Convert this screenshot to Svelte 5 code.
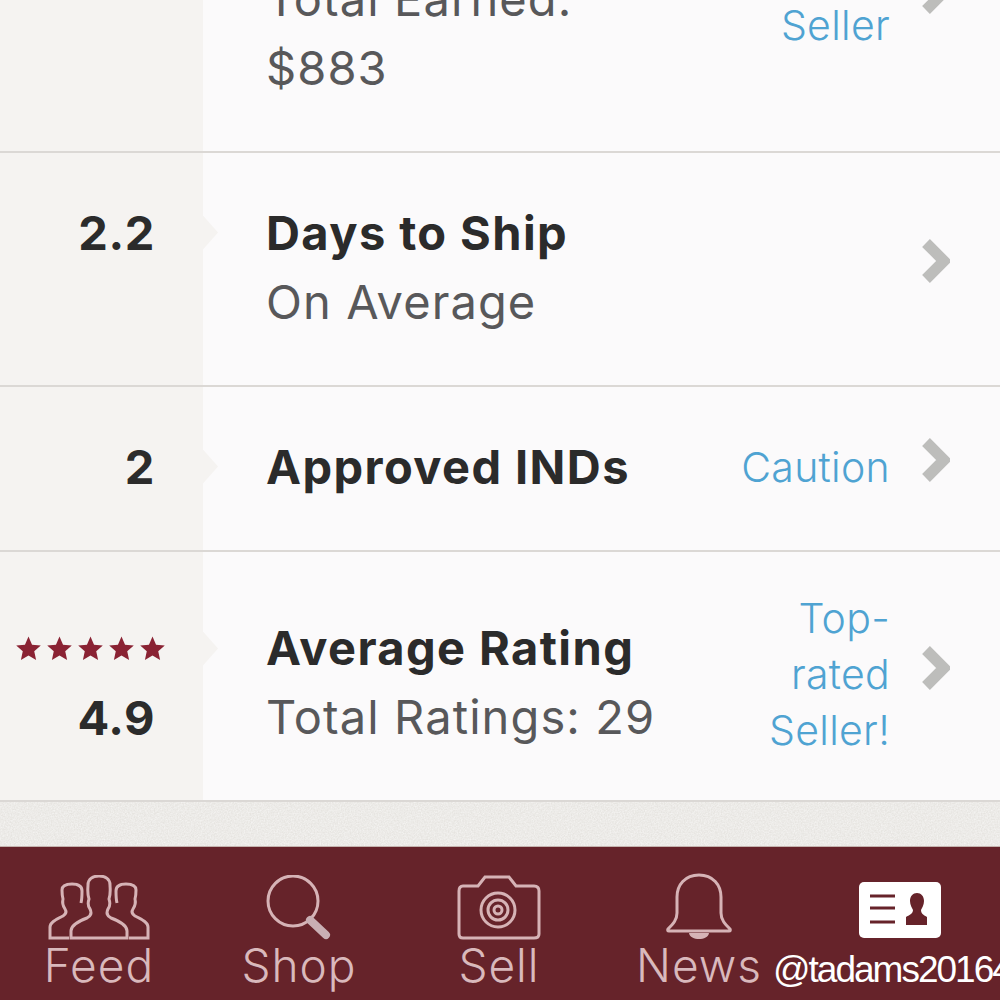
<script>
  const rows = [
    { id: 'earned', sub: ['Total Earned:', '$883'], link: 'Seller' },
    { id: 'ship', value: '2.2', title: 'Days to Ship', sub: ['On Average'] },
    { id: 'inds', value: '2', title: 'Approved INDs', link: 'Caution' },
    { id: 'rating', value: '4.9', stars: 5, title: 'Average Rating', sub: ['Total Ratings: 29'], link: 'Top-rated Seller!' }
  ];

  const tabs = ['Feed', 'Shop', 'Sell', 'News'];
  const bust = 'C22 50 30 46 38 43 C42 41 43 38 41 34 C38 30 39 27 40 24 C38 18 39 13 39 10 C39 4 44 1 50 1 C56 1 61 4 61 10 C61 13 62 18 60 24 C61 27 62 30 59 34 C57 38 58 41 62 43 C70 46 78 50 78 56';
</script>

<div class="screen">
  <div class="list">
    {#each rows as row}
      <div class="row {row.id}">
        <div class="side">
          {#if row.stars}
            <div class="first stars">
              {#each Array(row.stars) as _}
                <svg viewBox="0 0 24 24" width="25" height="25"><path d="M12 .5l3.4 7.8 8.4.8-6.3 5.6 1.8 8.3L12 18.7l-7.3 4.3 1.8-8.3L.2 9.1l8.4-.8z" /></svg>
              {/each}
            </div>
            <div class="value">{row.value}</div>
          {:else if row.value}
            <div class="first value">{row.value}</div>
          {/if}
        </div>
        <div class="main">
          <div class="text">
            {#if row.title}<div class="title">{row.title}</div>{/if}
            {#each row.sub ?? [] as line}<div class="sub">{line}</div>{/each}
          </div>
          {#if row.link}<div class="link">{row.link}</div>{/if}
          <svg class="chevron" viewBox="0 0 30 44" width="30" height="44"><path d="M6 4l18 18L6 40" /></svg>
        </div>
      </div>
    {/each}
  </div>

  <div class="strip">
    <svg width="1000" height="44">
      <filter id="grain">
        <feTurbulence type="fractalNoise" baseFrequency="0.7" numOctaves="2" />
        <feColorMatrix values="0 0 0 0 1  0 0 0 0 1  0 0 0 0 1  0.9 0 0 0 -0.2" />
      </filter>
      <rect width="1000" height="44" filter="url(#grain)" />
    </svg>
  </div>

  <nav class="tabbar">
    {#each tabs as tab}
      <div class="tab">
        <div class="icon">
          {#if tab === 'Feed'}
            <svg viewBox="0 0 100 66" width="102" height="66">
              <path d="M20 63H1V52C1 47 8 44 14 41C17 39 18 37 16 34C14 31 13 28 14 24C13 20 13 17 13 15C13 11 17 9 23 9C29 9 33 11 33 16C33 20 33 24 32 28" />
              <path d="M80 63H99V52C99 47 92 44 86 41C83 39 82 37 84 34C86 31 87 28 86 24C87 20 87 17 87 15C87 11 83 9 77 9C71 9 67 11 67 16C67 20 67 24 68 28" />
              <path class="front" d="M22 63V56{bust}V63Z" />
            </svg>
          {:else if tab === 'Shop'}
            <svg viewBox="0 0 66 66" width="66" height="66">
              <circle cx="27" cy="26" r="25" />
              <path class="handle" d="M44 45L60 60" />
            </svg>
          {:else if tab === 'Sell'}
            <svg viewBox="0 0 84 66" width="84" height="66">
              <path d="M6 11H21L28 2H52L59 11H77Q82 11 82 16V59Q82 63 77 63H6Q2 63 2 59V16Q2 11 6 11Z" />
              <circle cx="41" cy="35" r="17" />
              <circle cx="41" cy="35" r="10" />
              <circle cx="41" cy="35" r="4" />
            </svg>
          {:else}
            <svg viewBox="0 0 68 68" width="68" height="68">
              <path d="M34 2C20 2 12 12 12 24V40C12 47 8 51 3 56Q2 58 4 58H64Q66 58 65 56C60 51 56 47 56 40V24C56 12 48 2 34 2Z" />
              <path class="bell-foot" d="M24 60H44C43 68 25 68 24 60Z" />
            </svg>
          {/if}
        </div>
        <span>{tab}</span>
      </div>
    {/each}
    <div class="tab me">
      <div class="icon">
        <svg viewBox="0 0 82 56" width="82" height="56">
          <rect width="82" height="56" rx="5" />
          <path class="lines" d="M11 14H36M11 26H36M11 40H36" />
          <path class="person" d="M58 11C54 11 51 14 51 19C51 23 53 26 54 28C54 32 50 33 47 35V43H68V35C65 33 62 32 62 28C63 26 65 23 65 19C65 14 62 11 58 11Z" />
        </svg>
      </div>
      <span class="handle-text">@tadams20164</span>
    </div>
  </nav>
</div>

<style>
  :global(body) {
    margin: 0;
    background: #fbfafb;
  }

  .screen {
    height: 1000px;
    overflow: hidden;
    display: flex;
    flex-direction: column;
    font-family: Inter, "Noto Sans", sans-serif;
  }

  .list {
    margin-top: -151px;
  }

  .row {
    display: flex;
    border-bottom: 2px solid #dbd8d5;
    background: #fbfafb;
  }

  .earned { min-height: 302px; }
  .ship { min-height: 232px; }
  .inds { min-height: 163px; }
  .rating { min-height: 248px; }

  .side {
    width: 203px;
    flex: none;
    box-sizing: border-box;
    padding: 0 48px 4px 0;
    background: #f5f3f1;
    display: flex;
    flex-direction: column;
    justify-content: center;
    align-items: flex-end;
  }

  .first {
    position: relative;
  }

  .first::after {
    content: "";
    position: absolute;
    top: 50%;
    right: -63px;
    width: 15px;
    height: 34px;
    margin-top: -17px;
    background: #f5f3f1;
    clip-path: polygon(0 0, 100% 50%, 0 100%);
  }

  .value {
    height: 69px;
    line-height: 69px;
    font-size: 47px;
    font-weight: 700;
    letter-spacing: 0.6px;
    color: #2b2b2b;
  }

  .stars {
    height: 69px;
    display: flex;
    align-items: center;
    gap: 6px;
    margin-right: -10px;
  }

  .stars::after {
    right: -53px;
  }

  .stars path {
    fill: #8a2233;
  }

  .main {
    flex: 1;
    display: flex;
    align-items: center;
    padding: 0 50px 0 63px;
  }

  .text {
    flex: 1;
    margin-bottom: 4px;
  }

  .earned .text { margin-top: 70px; }
  .earned .link { margin-top: 54px; }
  .ship .side { padding-bottom: 73px; }
  .rating .text { margin-top: 16px; }
  .rating .side { padding-top: 18px; }

  .title {
    line-height: 69px;
    font-size: 47px;
    font-weight: 700;
    letter-spacing: 1.4px;
    color: #2b2b2b;
  }

  .sub {
    line-height: 69px;
    font-size: 47px;
    font-weight: 400;
    letter-spacing: 1.1px;
    color: #58585a;
  }

  .link {
    width: 150px;
    margin-bottom: 4px;
    text-align: right;
    line-height: 56px;
    font-size: 41px;
    font-weight: 300;
    letter-spacing: 0.3px;
    color: #4fa3d2;
  }

  .chevron {
    flex: none;
    margin: 0 0 17px 30px;
  }

  .chevron path {
    fill: none;
    stroke: #bdbdbb;
    stroke-width: 11;
  }

  .strip {
    height: 44px;
    flex: none;
    background: #e6e4e0;
  }

  .strip svg {
    display: block;
  }

  .tabbar {
    flex: 1;
    display: grid;
    grid-template-columns: repeat(5, 200px);
    background: #66232a;
    border-top: 1px solid #c4b3ae;
  }

  .tab {
    display: flex;
    flex-direction: column;
    align-items: center;
    box-sizing: border-box;
    padding-right: 2px;
    color: #d9b9bc;
    font-size: 46px;
    font-weight: 300;
    letter-spacing: 1px;
    line-height: 50px;
    min-width: 0;
  }

  .icon {
    height: 70px;
    margin-top: 24px;
    display: flex;
    align-items: flex-end;
    margin-bottom: -1px;
  }

  .icon svg {
    display: block;
  }

  .icon path,
  .icon circle {
    fill: none;
    stroke: #d6b3b6;
    stroke-width: 3;
  }

  .icon .front {
    fill: #66232a;
  }

  .icon .handle {
    stroke: #c9afb4;
    stroke-width: 8;
    stroke-linecap: round;
  }

  .icon .bell-foot {
    fill: #d6b3b6;
    stroke: none;
  }

  .me {
    padding-right: 0;
  }

  .me rect {
    fill: #fff;
  }

  .me .icon {
    margin-top: 21px;
    margin-bottom: 7px;
  }

  .icon .lines {
    stroke: #66232a;
  }

  .icon .person {
    fill: #66232a;
    stroke: none;
  }

  .handle-text {
    align-self: flex-start;
    margin-left: -27px;
    white-space: nowrap;
    color: #fff;
    font-family: "Liberation Sans", sans-serif;
    font-size: 37px;
    letter-spacing: -2px;
    font-weight: 400;
  }
</style>
